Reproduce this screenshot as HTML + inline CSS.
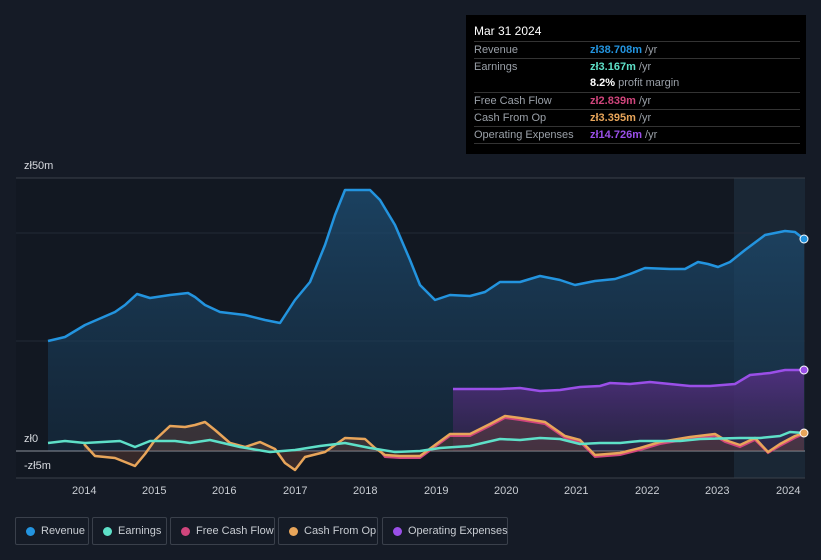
<!DOCTYPE html>
<html><head><meta charset="utf-8"><style>
body{margin:0;background:#151b26;font-family:"Liberation Sans",sans-serif;}
.wrap{position:relative;width:821px;height:560px;overflow:hidden;background:#151b26;}
.tt{position:absolute;left:466px;top:15px;width:340px;height:139px;background:#000;color:#fff;font-size:11px;}
.tt .row{position:absolute;left:8px;right:6px;height:17px;border-top:1px solid #333;color:#9aa0a8;}
.tt .row span{position:absolute;left:116px;top:2px;}
.tt .row b{font-weight:bold}
.lbl{position:absolute;color:#d8dbe0;font-size:11px;}
.xl{position:absolute;top:485px;color:#c8ccd2;font-size:11px;}
.leg{position:absolute;top:517px;height:28px;border:1px solid #3a404b;border-radius:2px;color:#c8ccd2;font-size:11px;line-height:26px;box-sizing:border-box;white-space:nowrap;}
.leg i{position:absolute;left:10px;top:9px;width:9px;height:9px;border-radius:50%;}
.leg span{position:absolute;left:25px;}
</style></head><body><div class="wrap">
<svg width="821" height="560" style="position:absolute;left:0;top:0">
<defs>
<linearGradient id="rg" x1="0" y1="0" x2="0" y2="1"><stop offset="0" stop-color="#1e4f75" stop-opacity=".75"/><stop offset="1" stop-color="#16324a" stop-opacity=".5"/></linearGradient>
<linearGradient id="og" x1="0" y1="0" x2="0" y2="1"><stop offset="0" stop-color="#5b2f8a" stop-opacity=".8"/><stop offset="1" stop-color="#3a2450" stop-opacity=".5"/></linearGradient>
</defs>
<rect x="16" y="178" width="789" height="300" fill="#121822"/>
<rect x="734" y="178" width="71" height="300" fill="#1a2735"/>
<line x1="16" y1="178" x2="805" y2="178" fill="none" stroke="#3a404b"/>
<line x1="16" y1="233" x2="805" y2="233" stroke="#222a36"/>
<line x1="16" y1="341" x2="805" y2="341" stroke="#222a36"/>
<line x1="16" y1="478" x2="805" y2="478" stroke="#3a404b"/>
<path d="M48,341 L65,337 85,325 115,312 125,305 137,294 150,298 170,295 188,293 195,297 205,305 220,312 245,315 265,320 280,323 295,300 310,282 325,245 335,215 345,190 370,190 380,200 395,225 410,260 420,285 435,300 450,295 470,296 485,292 500,282 520,282 540,276 560,280 575,285 595,281 615,279 630,274 645,268 670,269 685,269 698,262 708,264 718,267 730,262 745,250 765,235 785,231 795,232 804,239 L804,451 L48,451Z" fill="url(#rg)"/>
<path d="M453,389 L500,389 520,388 540,391 560,390 580,387 600,386 610,383 630,384 650,382 670,384 690,386 710,386 735,384 750,375 770,373 785,370 804,370 L804,451 L453,451Z" fill="url(#og)"/>
<line x1="16" y1="451" x2="805" y2="451" stroke="#8a909a"/>
<path d="M48,341 L65,337 85,325 115,312 125,305 137,294 150,298 170,295 188,293 195,297 205,305 220,312 245,315 265,320 280,323 295,300 310,282 325,245 335,215 345,190 370,190 380,200 395,225 410,260 420,285 435,300 450,295 470,296 485,292 500,282 520,282 540,276 560,280 575,285 595,281 615,279 630,274 645,268 670,269 685,269 698,262 708,264 718,267 730,262 745,250 765,235 785,231 795,232 804,239" fill="none" stroke="#2394df" stroke-width="2.5" stroke-linejoin="round"/>
<path d="M453,389 L500,389 520,388 540,391 560,390 580,387 600,386 610,383 630,384 650,382 670,384 690,386 710,386 735,384 750,375 770,373 785,370 804,370" fill="none" stroke="#9a4fe8" stroke-width="2.5"/>
<path d="M84,444 L95,456 115,458 125,462 135,466 145,454 155,440 170,426 185,427 195,425 205,422 215,430 230,443 245,447 260,442 275,449 285,463 295,470 305,457 325,452 345,438 365,439 375,448 385,455 400,456 420,456 435,445 450,434 470,434 490,424 505,416 520,418 545,422 565,436 580,440 595,455 620,453 640,448 660,442 690,437 715,434 725,440 740,445 755,438 768,452 780,444 795,436 804,433 L804,451 L84,451Z" fill="#7a4a3a" fill-opacity=".35"/>
<path d="M380,451 L385,457 400,458 420,458 435,447 450,436 470,436 490,426 505,418 520,420 545,424 565,438 580,442 595,457 620,455 640,450 660,444 690,439 715,436 725,442 740,447 755,440 768,453 780,446 795,438 804,434" fill="none" stroke="#d0457c" stroke-width="2"/>
<path d="M84,444 L95,456 115,458 125,462 135,466 145,454 155,440 170,426 185,427 195,425 205,422 215,430 230,443 245,447 260,442 275,449 285,463 295,470 305,457 325,452 345,438 365,439 375,448 385,455 400,456 420,456 435,445 450,434 470,434 490,424 505,416 520,418 545,422 565,436 580,440 595,455 620,453 640,448 660,442 690,437 715,434 725,440 740,445 755,438 768,452 780,444 795,436 804,433" fill="none" stroke="#e8a55a" stroke-width="2.5" stroke-linejoin="round"/>
<path d="M48,443 L65,441 85,443 120,441 135,447 150,441 175,441 190,443 210,440 240,447 270,452 295,450 320,446 345,443 370,448 395,452 420,451 440,448 470,446 500,439 520,440 540,438 560,439 580,444 600,443 620,443 640,441 680,441 700,439 740,438 760,438 780,436 790,432 804,433" fill="none" stroke="#5ee0c8" stroke-width="2.5" stroke-linejoin="round"/>
<circle cx="804" cy="239" r="4" fill="#2394df" stroke="#fff" stroke-width="1"/>
<circle cx="804" cy="370" r="4" fill="#9a4fe8" stroke="#fff" stroke-width="1"/>
<circle cx="804" cy="433" r="4" fill="#e8a55a" stroke="#fff" stroke-width="1"/>
</svg>
<div class="lbl" style="left:24px;top:160px">zł50m</div>
<div class="lbl" style="left:24px;top:433px">zł0</div>
<div class="lbl" style="left:24px;top:460px">-zł5m</div>
<div class="xl" style="left:72px">2014</div><div class="xl" style="left:142px">2015</div><div class="xl" style="left:212px">2016</div><div class="xl" style="left:283px">2017</div><div class="xl" style="left:353px">2018</div><div class="xl" style="left:424px">2019</div><div class="xl" style="left:494px">2020</div><div class="xl" style="left:564px">2021</div><div class="xl" style="left:635px">2022</div><div class="xl" style="left:705px">2023</div><div class="xl" style="left:776px">2024</div>
<div class="tt">
<div style="position:absolute;left:8px;top:9px;font-size:12px;color:#fff">Mar 31 2024</div>
<div class="row" style="top:26px"><div style="padding-top:2px">Revenue</div><span><b style="color:#2394df">zł38.708m</b> /yr</span></div>
<div class="row" style="top:43px"><div style="padding-top:2px">Earnings</div><span><b style="color:#5ee0c8">zł3.167m</b> /yr</span></div>
<div class="row" style="top:60px;border-top:none"><span><b style="color:#fff">8.2%</b> profit margin</span></div>
<div class="row" style="top:77px"><div style="padding-top:2px">Free Cash Flow</div><span><b style="color:#d0457c">zł2.839m</b> /yr</span></div>
<div class="row" style="top:94px"><div style="padding-top:2px">Cash From Op</div><span><b style="color:#e8a55a">zł3.395m</b> /yr</span></div>
<div class="row" style="top:111px"><div style="padding-top:2px">Operating Expenses</div><span><b style="color:#9a4fe8">zł14.726m</b> /yr</span></div>
<div class="row" style="top:128px;height:0"></div>
</div>
<div class="leg" style="left:15px;width:74px"><i style="background:#2394df"></i><span>Revenue</span></div>
<div class="leg" style="left:92px;width:75px"><i style="background:#5ee0c8"></i><span>Earnings</span></div>
<div class="leg" style="left:170px;width:105px"><i style="background:#d0457c"></i><span>Free Cash Flow</span></div>
<div class="leg" style="left:278px;width:100px"><i style="background:#e8a55a"></i><span>Cash From Op</span></div>
<div class="leg" style="left:382px;width:126px"><i style="background:#9a4fe8"></i><span>Operating Expenses</span></div>
</div></body></html>
